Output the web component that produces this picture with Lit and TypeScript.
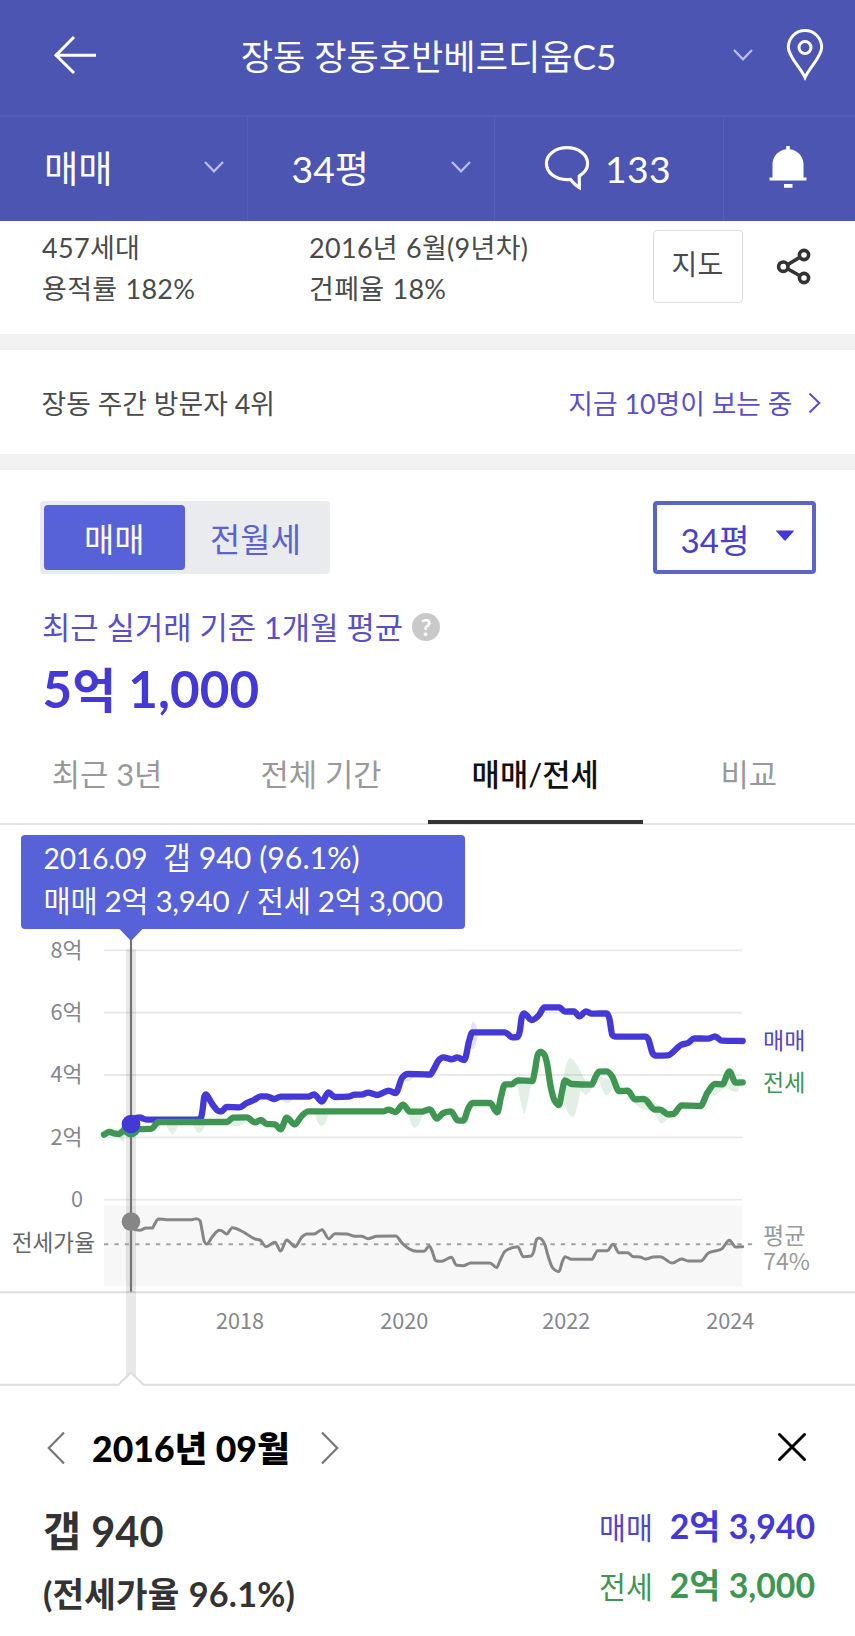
import { LitElement, html, svg, css } from "lit";
import { customElement } from "lit/decorators.js";

type Pt = [number, number];

// Monotone cubic interpolation through the points.
function curve(p: Pt[]): string {
  const n = p.length;
  const s: number[] = [];
  for (let i = 0; i < n - 1; i++) s.push((p[i + 1][1] - p[i][1]) / (p[i + 1][0] - p[i][0]));
  const t: number[] = [s[0]];
  for (let i = 1; i < n - 1; i++) {
    if (s[i - 1] * s[i] <= 0) t.push(0);
    else {
      const h0 = p[i][0] - p[i - 1][0];
      const h1 = p[i + 1][0] - p[i][0];
      const w = (s[i - 1] * h1 + s[i] * h0) / (h0 + h1);
      t.push(Math.sign(w) * Math.min(Math.abs(w), 2 * Math.abs(s[i - 1]), 2 * Math.abs(s[i])));
    }
  }
  t.push(s[n - 2]);
  let d = `M${p[0][0]},${p[0][1]}`;
  for (let i = 0; i < n - 1; i++) {
    const h = (p[i + 1][0] - p[i][0]) / 3;
    d += `C${p[i][0] + h},${p[i][1] + t[i] * h} ${p[i + 1][0] - h},${p[i + 1][1] - t[i + 1] * h} ${p[i + 1][0]},${p[i + 1][1]}`;
  }
  return d;
}

const right = (p: Pt[]): Pt[] => p.map(([x, y]) => [x + 1275, y]);

const SALE: Pt[] = [
  [393, 582], [402, 566], [418, 562], [440, 569], [580, 569], [601, 567], [607, 545], [613, 500], [618, 493], [626, 504],
  [640, 527], [658, 544], [664, 544], [680, 531], [718, 532], [740, 519], [762, 510], [782, 499], [800, 499], [823, 507],
  [842, 500], [925, 500], [942, 493], [966, 515], [985, 487], [1004, 501], [1045, 500], [1065, 494], [1085, 494],
  [1104, 488], [1132, 495], [1166, 482], [1187, 489], [1207, 442], [1225, 432],
  ...right([
    [0, 433], [15, 434], [25, 420], [40, 392], [55, 382], [80, 388], [97, 382], [118, 390], [133, 330], [142, 307],
    [240, 307], [262, 322], [278, 321], [285, 300], [290, 262], [297, 250], [320, 270], [342, 255], [358, 232], [403, 232],
    [420, 245], [447, 244], [463, 259], [483, 244], [500, 251], [545, 250], [553, 265], [562, 315], [570, 320], [662, 320],
    [670, 328], [683, 370], [692, 377], [728, 376], [768, 345], [790, 338], [808, 325], [850, 326], [870, 319], [890, 332],
    [953, 333],
  ]),
];

const RENT: Pt[] = [
  [312, 614], [328, 606], [345, 611], [358, 612], [374, 598], [393, 598], [455, 596], [475, 576], [682, 576], [698, 563],
  [740, 562], [765, 577], [783, 570], [800, 582], [825, 583], [842, 598], [860, 563], [884, 583], [905, 558], [925, 544],
  [1150, 544], [1165, 539], [1187, 546], [1209, 524], [1230, 545], [1268, 545],
  ...right([
    [0, 542], [15, 538], [35, 566], [55, 549], [78, 544], [98, 571], [115, 572], [130, 535], [142, 519], [195, 519],
    [217, 547], [228, 500], [240, 463], [260, 463], [278, 451], [322, 453], [330, 420], [338, 375], [346, 366], [358, 374],
    [366, 400], [377, 470], [388, 510], [402, 525], [410, 490], [420, 451], [440, 462], [500, 464], [512, 440], [522, 425],
    [545, 424], [562, 440], [582, 483], [608, 482], [630, 508], [657, 507], [690, 539], [705, 539], [730, 553], [745, 552],
    [770, 526], [826, 528], [848, 487], [870, 462], [892, 463], [913, 424], [932, 458], [953, 457],
  ]),
];

const RATIO: Pt[] = [
  [393, 95], [405, 119], [420, 121], [438, 114], [457, 114], [465, 100], [475, 87], [500, 89], [575, 89], [590, 86],
  [600, 92], [606, 120], [613, 155], [620, 162], [637, 140], [658, 121], [665, 122], [680, 132], [697, 113], [730, 126],
  [765, 147], [780, 150], [798, 170], [825, 157], [842, 183], [860, 150], [885, 170], [905, 142], [920, 132], [942, 132],
  [966, 119], [986, 146], [1005, 131], [1040, 132], [1065, 139], [1085, 139], [1104, 146], [1130, 139], [1187, 138],
  [1207, 160], [1228, 177], [1250, 184],
  ...right([
    [-3, 184], [13, 168], [22, 185], [32, 212], [50, 214], [79, 202], [95, 226], [115, 227], [137, 219], [195, 219],
    [215, 233], [225, 212], [240, 184], [278, 170], [295, 200], [318, 198], [326, 185], [335, 148], [342, 144], [358, 160],
    [370, 200], [382, 232], [402, 245], [412, 215], [420, 200], [440, 208], [500, 208], [518, 182], [547, 182], [564, 163],
    [582, 188], [608, 188], [625, 200], [645, 201], [662, 207], [685, 201], [705, 200], [742, 219], [770, 207], [790, 213],
    [828, 213], [850, 189], [890, 177], [913, 151], [932, 171], [953, 170],
  ]),
];

const chevron = html`<svg class="chev" width="22" height="14" viewBox="0 0 22 14"><path d="M2 2 11 11.3 20 2" /></svg>`;

@customElement("price-chart")
class PriceChart extends LitElement {
  static styles = css`
    :host { display: block; position: relative; height: 561px; }
    svg { display: block; }
    text { font-family: "Noto Sans CJK KR", sans-serif; }
    .grid { stroke: #e9e9e9; stroke-width: 5.5; }
    .rule { stroke: #dedede; stroke-width: 6; fill: none; }
    .band { fill: #000; fill-opacity: 0.09; }
    .cursor { stroke: #747474; stroke-width: 6.5; }
    .sale { fill: none; stroke: #4438d6; stroke-width: 19; stroke-linecap: round; stroke-linejoin: round; }
    .rent { fill: none; stroke: #3e9652; stroke-width: 19; stroke-linecap: round; stroke-linejoin: round; }
    .ratio { fill: none; stroke: #868686; stroke-width: 9; stroke-linecap: round; stroke-linejoin: round; }
    .avg { stroke: #a2a2a2; stroke-width: 6; stroke-dasharray: 13 18.15; }
    .area { fill: #f7f7f7; }
    .rent-range { fill: #3e9652; fill-opacity: 0.15; }
    .sale-range { fill: #4438d6; fill-opacity: 0.14; }
    .axis { fill: #85858f; font-size: 65px; }
    .name { fill: #666; font-size: 68px; }
    .mean { fill: #999; font-size: 69px; }
    .sale-name { fill: #5145cc; font-size: 69px; }
    .rent-name { fill: #3e9652; font-size: 69px; }
    .tip {
      position: absolute; left: 20.5px; top: 10px; width: 444.5px; height: 93.5px; border-radius: 4px;
      background: #5761d8; color: #fff; box-sizing: border-box; padding: 2px 0 0 23px;
      font: 400 30.3px/41.7px Lato, "Noto Sans CJK KR", sans-serif; white-space: pre;
    }
    .date { font-size: 28px; }
    .pair { font-size: 29.6px; letter-spacing: -0.33px; }
    .tip-arrow { position: absolute; left: 118px; top: 103px; }
    .tip-arrow path { fill: #5761d8; }
  `;
  render() {
    return html`
      <svg width="855" height="561" viewBox="0 2475 2565 1683">
        <rect class="area" x="312" y="3617" width="1914" height="241" />
        ${[2851, 3038, 3225, 3412, 3599].map((y) => svg`<path class="grid" d="M312 ${y}H2226" />`)}
        <path class="rule" d="M0 3877H2565" />
        <rect class="band" x="378" y="2848" width="30" height="1306" />
        <path class="rule" d="M0 4154H2565" />
        <path d="M354 4160 393 4119 432 4160Z" fill="#fff" />
        <path class="rule" d="M355 4154 393 4118 431 4154" />
        <path class="avg" d="M312 3733H2262" />
        <g transform="translate(0 2790)">
          <path class="rent-range" d="M312 606Q330 588 350 598L372 598V640Q360 630 350 612ZM498 580Q517 645 536 580ZM578 580Q598 638 617 580ZM685 570Q705 610 750 566ZM943 548Q965 628 988 548ZM1223 548Q1245 638 1270 548Z" />
          <path class="rent-range" d="M1548 455C1558 480 1564 540 1573 552C1582 540 1586 480 1598 455ZM1612 370Q1622 340 1634 366ZM1685 500C1688 440 1700 384 1710 383C1732 390 1745 440 1765 464L1780 466Q1768 492 1757 496Q1745 485 1742 480C1732 530 1728 560 1717 562C1702 555 1694 520 1685 500ZM1795 440Q1808 492 1820 497Q1834 490 1844 450ZM1890 500Q1915 545 1960 540Q1975 576 1985 582Q2000 570 2020 555L1960 515ZM2125 480Q2140 500 2148 496Q2165 475 2180 474Q2205 490 2215 484L2222 440L2210 450L2170 465Z" />
          <path class="sale-range" d="M1402 350C1410 310 1412 275 1419 275C1428 276 1432 300 1435 310C1430 340 1424 358 1420 358ZM1210 450Q1225 462 1245 438ZM845 508Q862 532 878 508Z" />
          <path class="rent" d=${curve(RENT.slice(0, 6))} />
          <path class="sale" d=${curve(SALE)} />
          <path class="rent" d=${curve(RENT.slice(5))} />
        </g>
        <path class="ratio" transform="translate(0 3570)" d=${curve(RATIO)} />
        <path class="cursor" d="M393 2810V3875" />
        <circle cx="393" cy="3384" r="28" fill="#3e9652" />
        <circle cx="393" cy="3372" r="28" fill="#4438d6" />
        <circle cx="393" cy="3665" r="28" fill="#868686" />
        <g class="axis" text-anchor="end">
          <text x="247" y="2873">8억</text>
          <text x="247" y="3060">6억</text>
          <text x="247" y="3247">4억</text>
          <text x="247" y="3434">2억</text>
          <text x="249" y="3621">0</text>
        </g>
        <g class="axis" text-anchor="middle">
          <text x="720" y="3988">2018</text>
          <text x="1213" y="3988">2020</text>
          <text x="1699" y="3988">2022</text>
          <text x="2191" y="3988">2024</text>
        </g>
        <text class="name" x="35" y="3754">전세가율</text>
        <text class="sale-name" x="2289" y="3146">매매</text>
        <text class="rent-name" x="2289" y="3272">전세</text>
        <text class="mean" x="2289" y="3732">평균</text>
        <text class="mean" x="2290" y="3810">74%</text>
      </svg>
      <div class="tip"><div><span class="date">2016.09</span>  갭 940 (96.1%)</div><div class="pair">매매 2억 3,940 / 전세 2억 3,000</div></div>
      <svg class="tip-arrow" width="26" height="14" viewBox="0 0 26 14"><path d="M0.5 0H25.5L13 13Z" /></svg>
    `;
  }
}

@customElement("app-root")
class AppRoot extends LitElement {
  static styles = css`
    :host {
      display: block; width: 855px; height: 1636px; overflow: hidden; background: #fff;
      font-family: Lato, "Noto Sans CJK KR", sans-serif; color: #4a4a4a;
    }
    * { box-sizing: border-box; }
    svg { display: block; flex: none; }
    .row { display: flex; align-items: center; white-space: pre; }
    header { background: #4c55b1; color: #fff; }
    .top { height: 117px; border-bottom: 2px solid #545db8; padding: 0 30px 5px 52px; font-size: 35.1px; }
    .title { flex: 1; text-align: center; padding: 0 0 2px 27px; }
    .chev path { fill: none; stroke: #b9bdf2; stroke-width: 2.2; }
    .ico { fill: none; stroke: #fff; }
    .pin { margin-left: 31px; }
    .cells { display: grid; grid-template-columns: 247px 247px 229px 132px; height: 103.5px; font-size: 37.3px; }
    .cells > div { border-left: 1.5px solid #565fba; padding: 0 22.5px 3px 43.5px; justify-content: space-between; }
    .cells > div:first-child { border-left: 0; padding-left: 44px; }
    .cells > .talk { justify-content: flex-start; gap: 15.5px; padding: 0 0 1px 48.5px; letter-spacing: 0.4px; }
    .cells > .bell { justify-content: center; padding: 0 4px 4px 0; }
    .info { height: 113px; padding: 6.5px 44px 0 42px; align-items: flex-start; font-size: 27px; line-height: 41.3px; letter-spacing: 0.3px; word-spacing: 0.8px; }
    .info > :first-child { width: 267px; }
    .info > :nth-child(2) { flex: 1; }
    .map { width: 90px; height: 73px; margin: 2.5px 33.5px 0 0; border: 1.5px solid #dcdcdc; border-radius: 4px; text-align: center; font-size: 28px; line-height: 67px; }
    .share { margin-top: 21px; }
    .gap { height: 16.5px; background: #f2f2f2; }
    .visit { height: 103.5px; padding: 1.5px 34.5px 0 41.5px; justify-content: space-between; font-size: 26.8px; }
    .watch { color: #5a4ecb; gap: 15px; }
    .switches { height: 104px; padding: 31px 39.5px 0 39.5px; justify-content: space-between; align-items: flex-start; font-size: 32.9px; }
    .seg { display: flex; width: 290.5px; height: 73px; background: #e9ebee; border-radius: 4px; padding: 4px; color: #5c63cf; line-height: 70px; text-align: center; }
    .seg b { font-weight: 400; width: 141.5px; height: 65px; border-radius: 4px; background: #5761d8; color: #fff; }
    .seg span { flex: 1; }
    .size { width: 163px; height: 73px; border: 4px solid #5b65c6; border-radius: 4px; color: #4a3ecb; padding: 1px 17px 0 24px; justify-content: space-between; font-size: 33.2px; }
    .basis { height: 44px; margin-top: 29px; padding-left: 42px; font-size: 30.8px; color: #5a4ecb; gap: 9px; }
    .help { width: 28px; height: 28px; border-radius: 50%; background: #c9c9c9; color: #fff; font: 700 23px/28px Lato, sans-serif; text-align: center; margin-top: 4px; }
    .price { height: 80.5px; padding: 0 0 0 42.5px; font-size: 51.2px; font-weight: 700; color: #4438d6; }
    .price span { font-size: 47.5px; }
    .tabs { display: grid; grid-template-columns: 214px 214px 214.5px 1fr; height: 97.5px; border-bottom: 2px solid #e2e2e2; font-size: 30.8px; color: #999; text-align: center; line-height: 94px; }
    .tabs .on { color: #111; font-weight: 500; border-bottom: 4.5px solid #333; height: 96px; }
    .month { height: 115px; padding: 9px 48px 0 47px; font-size: 35.6px; font-weight: 700; color: #000; }
    .month b { margin: 0 31.5px 0 27px; padding-bottom: 3px; }
    .month .close { margin: 0 0 3px auto; }
    .detail { display: flex; justify-content: space-between; padding: 0 40px 0 43px; color: #333; }
    .detail .left { font-weight: 700; font-size: 34.3px; line-height: 61.5px; letter-spacing: 0.2px; word-spacing: 0.5px; }
    .detail .left :first-child { font-size: 41.5px; letter-spacing: 0; word-spacing: 0; }
    .detail .sum { display: flex; align-items: baseline; justify-content: flex-end; gap: 17px; font-size: 29.2px; line-height: 57.5px; color: #5145cc; }
    .sum b { font-size: 33.8px; color: #4438d6; }
    .detail .sum.g, .sum.g b { color: #3e9652; }
    .right { margin-top: -3px; }
  `;
  render() {
    return html`
      <header>
        <div class="row top">
          <svg class="ico" width="46" height="40" viewBox="0 0 46 40"><path stroke-width="3" d="M22 2 4 20.3 22 38M3 20.3H44" /></svg>
          <div class="title">장동 장동호반베르디움C5</div>
          ${chevron}
          <svg class="ico pin" width="40" height="52" viewBox="0 0 40 52"><path stroke-width="3" d="M20 48.5C15 38 3.3 27.5 3.3 18.3a16.7 16.7 0 0 1 33.4 0C36.7 27.5 25 38 20 48.5Z" /><circle cx="20" cy="18.5" r="6" stroke-width="3" /></svg>
        </div>
        <div class="cells">
          <div class="row"><span>매매</span>${chevron}</div>
          <div class="row"><span>34평</span>${chevron}</div>
          <div class="row talk">
            <svg class="ico" width="46" height="46" viewBox="0 0 46 46"><path stroke-width="3.2" d="M35.300 42.500V31C40.500 28 43.600 24 43.600 18.600 43.600 9.400 34.400 2.600 23 2.600S2.400 9.400 2.400 18.600 11.600 34.600 23 34.600c1.200 0 2.300 0 3.600-.2 2.200 2.800 4.700 6 8.700 8.100Z" /></svg>
            <span>133</span>
          </div>
          <div class="row bell">
            <svg width="38" height="44" viewBox="0 0 38 44" fill="#fff"><path d="M17.200 1h3.600v3.200C29 5.200 34.500 11.500 34.500 19.500V32.500H37.500V35.500H.5V32.500H3.500V19.500C3.500 11.500 9 5.200 17.200 4.200ZM15 39h8.500v3.800H15Z" /></svg>
          </div>
        </div>
      </header>
      <div class="row info">
        <div>457세대<br />용적률 182%</div>
        <div>2016년 6월(9년차)<br />건폐율 18%</div>
        <div class="map">지도</div>
        <svg class="share" width="35" height="37" viewBox="0 0 35 37" fill="none" stroke="#333" stroke-width="3.6"><path d="M12 16.500 23 9.700M12 21 23 27.300" /><circle cx="7.300" cy="18.700" r="4.700" /><circle cx="28" cy="7" r="4.600" /><circle cx="28" cy="30" r="4.600" /></svg>
      </div>
      <div class="gap"></div>
      <div class="row visit">
        <span>장동 주간 방문자 4위</span>
        <div class="row watch"><span>지금 10명이 보는 중</span><svg width="13" height="22" viewBox="0 0 13 22" fill="none" stroke="#5a4ecb" stroke-width="2"><path d="M1.500 1.500 11.300 11 1.500 20.500" /></svg></div>
      </div>
      <div class="gap"></div>
      <div class="row switches">
        <div class="seg"><b>매매</b><span>전월세</span></div>
        <div class="row size"><span>34평</span><svg width="20" height="20" viewBox="0 0 20 20"><path fill="#4438d6" d="M1 3Q.5 2.500 1.500 2.500H18.500Q19.500 2.500 19 3L11 12Q10 13 9 12Z" /></svg></div>
      </div>
      <div class="row basis"><span>최근 실거래 기준 1개월 평균</span><span class="help">?</span></div>
      <div class="row price"><div>5<span>억</span> 1,000</div></div>
      <div class="tabs"><div>최근 3년</div><div>전체 기간</div><div class="on">매매/전세</div><div>비교</div></div>
      <price-chart></price-chart>
      <div class="row month">
        <svg width="18" height="34" viewBox="0 0 18 34" fill="none" stroke="#777" stroke-width="2.200"><path d="M17 1.500 1.800 17 17 32.500" /></svg>
        <b>2016년 09월</b>
        <svg width="18" height="34" viewBox="0 0 18 34" fill="none" stroke="#777" stroke-width="2.200"><path d="M1 1.500 16.200 17 1 32.500" /></svg>
        <svg class="close" width="30" height="30" viewBox="0 0 30 30" fill="none" stroke="#000" stroke-width="3" stroke-linecap="round"><path d="M2.500 2.500 27.500 27.500M27.500 2.500 2.500 27.500" /></svg>
      </div>
      <div class="detail">
        <div class="left"><div>갭 940</div><div>(전세가율 96.1%)</div></div>
        <div class="right"><div class="sum">매매<b>2억 3,940</b></div><div class="sum g">전세<b>2억 3,000</b></div></div>
      </div>
    `;
  }
}
